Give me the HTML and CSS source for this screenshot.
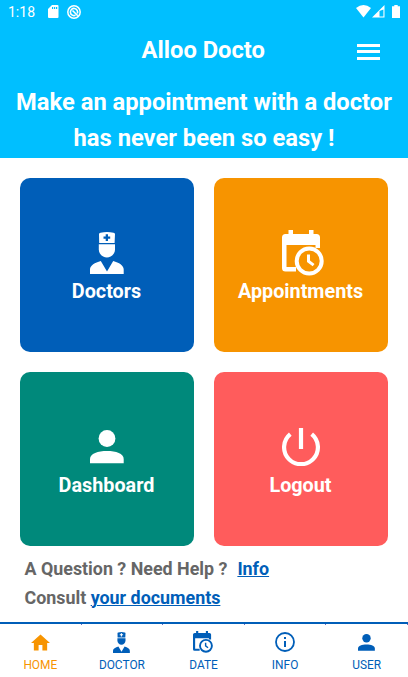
FILE: index.html
```html
<!DOCTYPE html>
<html lang="en">
<head>
    <meta charset="UTF-8">
    <meta name="viewport" content="width=device-width, initial-scale=1.0">
    <title>Alloo Docto</title>
    <link rel="stylesheet" href="styles.css">
</head>
<body>
    <!-- Shared icons -->
    <svg class="sprite">
        <symbol id="icon-doctor" viewBox="0 0 34 42">
            <path fill-rule="evenodd" d="M9 2Q9 1 10.500 .8Q17 -.6 23.500 .8Q25 1 25 2L24.600 11H9.200ZM15.700 2.300V4.500H13.500V6.700H15.700V8.900H18V6.700H20.200V4.500H18V2.300Z"/>
            <path d="M8.800 12.300H25V17.500C25 22 21 25.500 16.900 25.500S8.800 22 8.800 17.500Z"/>
            <path d="M0 42V37.500C0 33.500 5 30.500 10.800 29L17 39.500L23.200 29C29 30.500 33.700 33.500 33.700 37.500V42Z"/>
        </symbol>
        <symbol id="icon-date" viewBox="0 0 42 46">
            <path d="M6.500 0H11V4H27V0H31.500V4H34.500Q38 4 38 7.500V18H33.500V15H4.500V37H14V41.500H3.500Q0 41.500 0 38V7.500Q0 4 3.500 4H6.500Z"/>
            <circle cx="27.200" cy="31" r="12.500" fill="none" stroke="currentColor" stroke-width="4"/>
            <path d="M25 24.500H28V30.500L32.500 34L30.700 36.300L25 32Z"/>
        </symbol>
        <symbol id="icon-user" viewBox="0 0 34 34">
            <circle cx="17" cy="8.500" r="8.400"/>
            <path d="M0 33.300V29C0 23.500 8 21 17 21S33.700 23.500 33.700 29V33.300Z"/>
        </symbol>
    </svg>

    <header class="header">
        <div class="status-bar">
            <span class="time">1:18</span>
            <svg class="sd-icon" viewBox="0 0 11 13" width="11" height="13"><path fill-rule="evenodd" d="M4 0H9.500Q10.500 0 10.500 1V12Q10.500 13 9.500 13H1Q0 13 0 12V4ZM4 2V4H5.200V2ZM6 2V4H7.200V2ZM8 2V4H9.200V2Z"/></svg>
            <svg class="sync-icon" viewBox="0 0 14 14" width="14" height="14" fill="none" stroke="currentColor"><circle cx="7" cy="7" r="6.200" stroke-width="1.500"/><path d="M10.300 8.500A3.600 3.600 0 1 0 8.500 10.300M5.500 5.500L10.800 10.800" stroke-width="1.600"/></svg>
            <div class="signal">
                <svg viewBox="0 0 15 13" width="15" height="13"><path d="M0 3Q7.500 -3 15 3L7.500 12.500Z"/></svg>
                <svg viewBox="0 0 13 13" width="13" height="13"><path fill-rule="evenodd" d="M12.500 0V12.500H0ZM11.400 4.500L7.500 6V11.400H11.400Z"/></svg>
                <svg class="battery" viewBox="0 0 8 13" width="8" height="13"><path d="M2.300 0H5.700V1.300H8V13H0V1.300H2.300Z"/></svg>
            </div>
        </div>
        <div class="top-bar">
            <h1 class="title">Alloo Docto</h1>
            <button class="menu-button" aria-label="Menu">
                <span></span><span></span><span></span>
            </button>
        </div>
        <p class="slogan">Make an appointment with a doctor<br>has never been so easy !</p>
    </header>

    <main class="content">
        <div class="grid">
            <a class="card doctors">
                <svg class="card-icon" width="34" height="42"><use href="#icon-doctor"/></svg>
                <span>Doctors</span>
            </a>
            <a class="card appointments">
                <svg class="card-icon date" width="42" height="46"><use href="#icon-date"/></svg>
                <span>Appointments</span>
            </a>
            <a class="card dashboard">
                <svg class="card-icon user" width="34" height="34"><use href="#icon-user"/></svg>
                <span>Dashboard</span>
            </a>
            <a class="card logout">
                <svg class="card-icon power" viewBox="0 0 38 38" width="38" height="38" fill="none" stroke="currentColor" stroke-width="4.200">
                    <path d="M19 0V21M8.300 6.200A16.900 16.900 0 1 0 29.700 6.200"/>
                </svg>
                <span>Logout</span>
            </a>
        </div>
        <div class="help">
            <p>A Question ? Need Help ? <a class="link info-link">Info</a></p>
            <p>Consult <a class="link">your documents</a></p>
        </div>
    </main>

    <nav class="tabs">
        <a class="tab active">
            <svg viewBox="0 0 20 17" width="19" height="17"><path d="M8 17V11H12V17H17V9H20L10 0L0 9H3V17Z"/></svg>
            <span>HOME</span>
        </a>
        <a class="tab">
            <svg width="17" height="21"><use href="#icon-doctor"/></svg>
            <span>DOCTOR</span>
        </a>
        <a class="tab">
            <svg width="20" height="22"><use href="#icon-date"/></svg>
            <span>DATE</span>
        </a>
        <a class="tab">
            <svg viewBox="0 0 20 20" width="20" height="20"><circle cx="10" cy="10" r="9" fill="none" stroke="currentColor" stroke-width="1.800"/><path d="M9 5H11V7H9ZM9 9H11V15H9Z"/></svg>
            <span>INFO</span>
        </a>
        <a class="tab">
            <svg width="17" height="17"><use href="#icon-user"/></svg>
            <span>USER</span>
        </a>
    </nav>
</body>
</html>
```

FILE: styles.css
```css
* {
    box-sizing: border-box;
}
body {
    font-family: Roboto, "Liberation Sans", sans-serif;
    background-color: #fff;
    display: flex;
    flex-direction: column;
    height: 100vh;
    margin: 0;
    overflow: hidden;
}
svg {
    display: block;
    fill: currentColor;
}
svg[fill="none"] {
    fill: none;
}
.sprite {
    display: none;
}
.header {
    background-color: #00bfff;
    color: #fff;
    height: 158px;
}
.status-bar {
    display: flex;
    align-items: center;
    height: 24px;
    padding: 0 8px;
}
.time {
    font-size: 14px;
    width: 39.500px;
}
.sd-icon {
    margin-right: 8.500px;
    margin-top: -1px;
}
.signal {
    display: flex;
    gap: 1px;
    margin-left: auto;
    margin-top: -1px;
}
.battery {
    margin-left: 6px;
}
.top-bar {
    display: grid;
    grid-template-columns: 1fr auto 1fr;
    align-items: center;
    height: 54px;
    padding: 0 28.500px 0 27px;
}
.title {
    grid-column: 2;
    font-size: 23.700px;
    font-weight: bold;
    margin: -2px 0 0;
}
.menu-button {
    display: flex;
    flex-direction: column;
    gap: 3.500px;
    justify-self: end;
    width: 23px;
    padding: 0;
    margin-top: 1px;
    border: none;
    background: none;
    cursor: pointer;
}
.menu-button span {
    height: 3px;
    width: 100%;
    background-color: #fff;
}
.slogan {
    font-size: 23.720px;
    font-weight: bold;
    line-height: 36px;
    text-align: center;
    margin: 6px 0 0;
    white-space: nowrap;
}
.content {
    flex: 1;
    padding: 20px 20px 0 19.500px;
}
.grid {
    display: grid;
    grid-template-columns: repeat(2, 174px);
    grid-auto-rows: 174px;
    gap: 20px;
}
.card {
    display: flex;
    flex-direction: column;
    align-items: center;
    justify-content: flex-end;
    padding-bottom: 47px;
    border-radius: 10px;
    color: #fff;
    font-size: 19.800px;
    font-weight: bold;
    line-height: 26px;
    cursor: pointer;
}
.card-icon {
    margin-bottom: 5px;
}
.card-icon.date {
    margin-bottom: 3px;
    margin-left: 4px;
}
.card-icon.user {
    margin-bottom: 9px;
}
.card-icon.power {
    margin-bottom: 7px;
}
.doctors {
    background-color: #005eb8;
}
.appointments {
    background-color: #f79400;
}
.dashboard {
    background-color: #00897b;
}
.logout {
    background-color: #ff5c5c;
}
.help {
    padding: 8px 0 0 5px;
    color: #666;
    font-size: 17.860px;
    font-weight: bold;
}
.help p {
    margin: 0;
    line-height: 29px;
}
.link {
    color: #005eb8;
    text-decoration: underline;
    text-decoration-thickness: 1px;
    text-underline-offset: 1px;
    cursor: pointer;
}
.info-link {
    margin-left: 5.500px;
}
/* short divider ticks at the top and bottom of each tab */
.tabs {
    display: grid;
    grid-template-columns: repeat(5, 1fr);
    height: 55px;
    border-top: 2px solid #005eb8;
}
.tab {
    display: grid;
    grid-template-rows: 36px 1fr;
    align-items: center;
    justify-items: center;
    padding: 0 1px 9px 0;
    color: #005eb8;
    font-size: 11.900px;
    line-height: 10px;
    cursor: pointer;
    background: linear-gradient(#6b6bc0, #6b6bc0) right top / 1px 1px no-repeat,
        linear-gradient(#6b6bc0, #6b6bc0) right bottom / 1px 1px no-repeat;
}
.tab.active {
    color: #f79400;
}
```
